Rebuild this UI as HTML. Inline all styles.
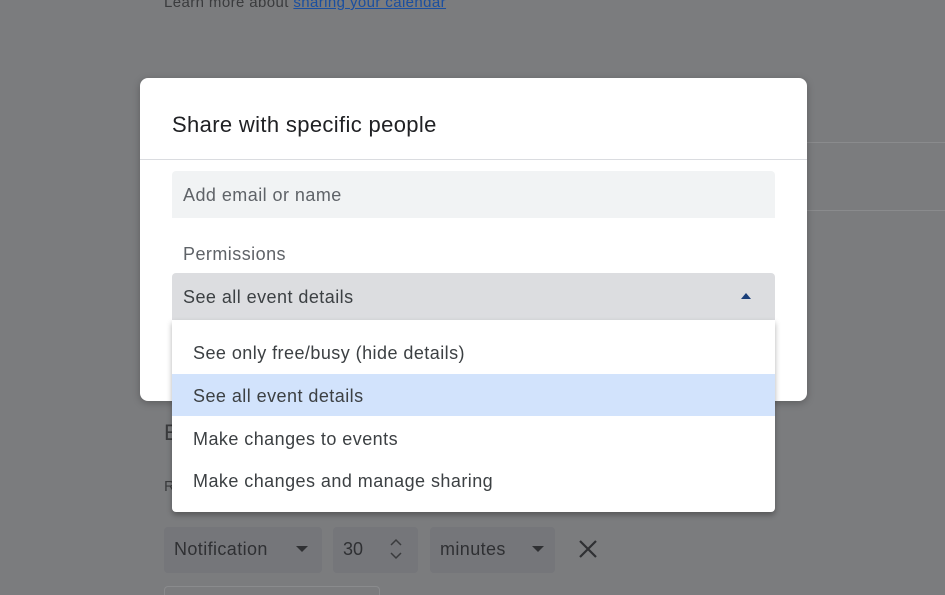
<!DOCTYPE html>
<html style="overflow:hidden"><head><style>
html,body{margin:0;width:945px;height:595px;overflow:hidden}
body{background:#7b7c7e;position:relative;font-family:"Liberation Sans",Arial,sans-serif;}
.a{position:absolute}
.t{color:#3c4043;font-size:18px;letter-spacing:.45px}
</style></head><body>
<div class="a" style="left:164px;top:-6px;font-size:15px;color:#3a3b3d;letter-spacing:.4px">Learn more about <span style="color:#1a4fa0;text-decoration:underline">sharing your calendar</span></div>
<div class="a" style="left:807px;top:142px;width:138px;height:1px;background:#8a8b8d"></div>
<div class="a" style="left:807px;top:210px;width:138px;height:1px;background:#8a8b8d"></div>
<div class="a" style="left:164px;top:420px;font-size:22px;color:#3a3b3d">E</div>
<div class="a" style="left:164px;top:478px;font-size:15px;color:#3a3b3d">R</div>
<div class="a" style="left:164px;top:527px;width:158px;height:46px;background:#75767a;border-radius:4px"></div>
<div class="a" style="left:174px;top:539px;font-size:18px;color:#2f3033;letter-spacing:.4px">Notification</div>
<div class="a" style="left:296px;top:546px;width:0;height:0;border-left:6px solid transparent;border-right:6px solid transparent;border-top:6px solid #2f3033"></div>
<div class="a" style="left:333px;top:527px;width:85px;height:46px;background:#75767a;border-radius:4px"></div>
<div class="a" style="left:343px;top:539px;font-size:18px;color:#2f3033">30</div>
<svg class="a" style="left:386px;top:537px" width="20" height="24" viewBox="0 0 20 24"><path d="M5 8l5-5 5 5M5 16l5 5 5-5" fill="none" stroke="#3a3b3d" stroke-width="1.5"/></svg>
<div class="a" style="left:430px;top:527px;width:125px;height:46px;background:#75767a;border-radius:4px"></div>
<div class="a" style="left:440px;top:539px;font-size:18px;color:#2f3033;letter-spacing:.4px">minutes</div>
<div class="a" style="left:532px;top:546px;width:0;height:0;border-left:6px solid transparent;border-right:6px solid transparent;border-top:6px solid #2f3033"></div>
<svg class="a" style="left:578px;top:539px" width="20" height="20" viewBox="0 0 20 20"><path d="M2 2l16 16M18 2L2 18" stroke="#2f3033" stroke-width="2.2"/></svg>
<div class="a" style="left:164px;top:586px;width:214px;height:20px;border:1px solid #8a8b8d;border-radius:4px"></div>

<div class="a" style="left:140px;top:78px;width:667px;height:323px;background:#fff;border-radius:8px;box-shadow:0 2px 8px rgba(0,0,0,.25)"></div>
<div class="a" style="left:172px;top:112px;font-size:22px;color:#202124;letter-spacing:.35px">Share with specific people</div>
<div class="a" style="left:140px;top:159px;width:667px;height:1px;background:#dadce0"></div>
<div class="a" style="left:172px;top:171px;width:603px;height:47px;background:#f1f3f4;border-radius:4px 4px 0 0"></div>
<div class="a t" style="left:183px;top:185px;color:#5f6368">Add email or name</div>
<div class="a t" style="left:183px;top:244px;color:#5f6368">Permissions</div>
<div class="a" style="left:172px;top:273px;width:603px;height:47px;background:#dcdde0;border-radius:4px 4px 0 0"></div>
<div class="a t" style="left:183px;top:287px">See all event details</div>
<div class="a" style="left:741px;top:293px;width:0;height:0;border-left:5px solid transparent;border-right:5px solid transparent;border-bottom:6px solid #1a3f7a"></div>
<div class="a" style="left:172px;top:320px;width:603px;height:192px;background:#fff;border-radius:0 0 4px 4px;box-shadow:0 3px 6px rgba(0,0,0,.3)"></div>
<div class="a" style="left:172px;top:374px;width:603px;height:42px;background:#d2e3fc"></div>
<div class="a t" style="left:193px;top:343px">See only free/busy (hide details)</div>
<div class="a t" style="left:193px;top:386px">See all event details</div>
<div class="a t" style="left:193px;top:429px">Make changes to events</div>
<div class="a t" style="left:193px;top:471px">Make changes and manage sharing</div>
</body></html>
